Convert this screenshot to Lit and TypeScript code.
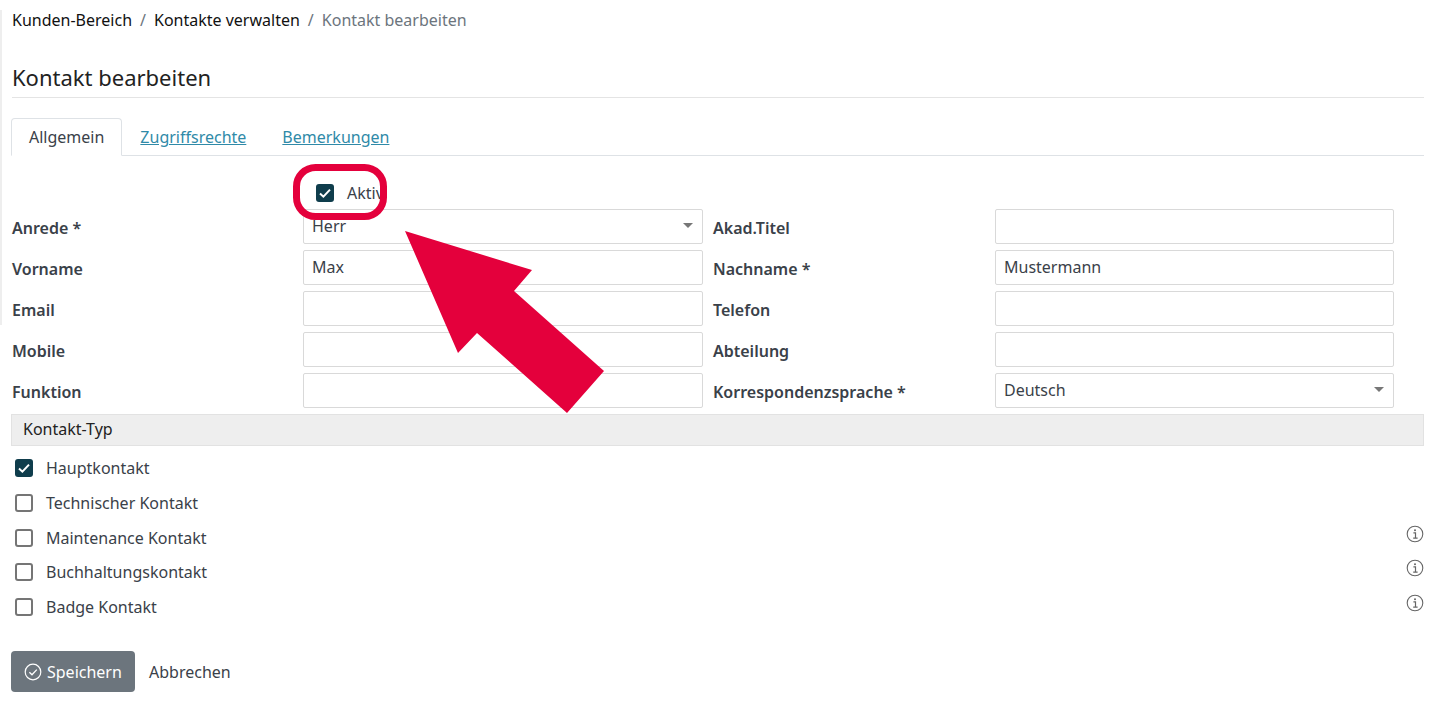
import { LitElement, css, html, svg } from "lit";
import { customElement } from "lit/decorators.js";

const FIELDS = [
  { label: "Anrede *", value: "Herr", select: true, label2: "Akad.Titel", value2: "" },
  { label: "Vorname", value: "Max", label2: "Nachname *", value2: "Mustermann" },
  { label: "Email", value: "", label2: "Telefon", value2: "" },
  { label: "Mobile", value: "", label2: "Abteilung", value2: "" },
  { label: "Funktion", value: "", label2: "Korrespondenzsprache *", value2: "Deutsch", select2: true },
];

const TYPES = [
  { label: "Hauptkontakt", checked: true },
  { label: "Technischer Kontakt" },
  { label: "Maintenance Kontakt", info: true },
  { label: "Buchhaltungskontakt", info: true },
  { label: "Badge Kontakt", info: true },
];

@customElement("app-root")
export class AppRoot extends LitElement {
  private _box(checked: boolean | undefined) {
    return html`<span class="box ${checked ? "on" : ""}">
      ${checked
        ? html`<svg viewBox="0 0 18 18" width="18" height="18">
            <path d="M4 9.5l3.4 3.2L14 5.6" fill="none" stroke="#fff" stroke-width="2" />
          </svg>`
        : ""}
    </span>`;
  }

  private _control(value: string, select?: boolean) {
    return html`<div class="control">
      <span>${value}</span>${select ? html`<i class="caret"></i>` : ""}
    </div>`;
  }

  private _info() {
    return html`<svg class="info" viewBox="0 0 18 18" width="18" height="18">
      <circle cx="9" cy="9" r="7.8" fill="none" stroke="#666" stroke-width="1.1" />
      <path d="M7.4 7.9H9.5V13M7.2 13.2h4.4" fill="none" stroke="#666" stroke-width="1.2" />
      <circle cx="9" cy="5.2" r="1" fill="#666" />
    </svg>`;
  }

  protected render() {
    return html`
      <div class="sliver"></div>
      <nav class="crumbs">
        <span>Kunden-Bereich</span><b>/</b><span>Kontakte verwalten</span><b>/</b>
        <span class="current">Kontakt bearbeiten</span>
      </nav>
      <h1>Kontakt bearbeiten</h1>
      <div class="tabs">
        <span class="tab active">Allgemein</span>
        <a class="tab">Zugriffsrechte</a>
        <a class="tab">Bemerkungen</a>
      </div>
      <div class="aktiv">${this._box(true)}<span>Aktiv</span></div>
      <div class="form">
        ${FIELDS.map(
          (f) => html`
            <label>${f.label}</label>
            ${this._control(f.value, f.select)}
            <label>${f.label2}</label>
            ${this._control(f.value2, f.select2)}
          `
        )}
      </div>
      <div class="section">Kontakt-Typ</div>
      <div class="types">
        ${TYPES.map(
          (t) => html`<div class="type">
            ${this._box(t.checked)}<span>${t.label}</span>${t.info ? this._info() : ""}
          </div>`
        )}
      </div>
      <div class="actions">
        <button>
          <svg viewBox="0 0 18 18" width="18" height="18">
            <circle cx="9" cy="9" r="7.8" fill="none" stroke="#fff" stroke-width="1.2" />
            <path d="M5.4 9.2l2.6 2.6 4.8-5.2" fill="none" stroke="#fff" stroke-width="1.3" />
          </svg>
          Speichern
        </button>
        <span class="cancel">Abbrechen</span>
      </div>
      <svg class="overlay" width="1430" height="702" viewBox="0 0 1430 702">
        ${svg`<rect x="296.5" y="167.5" width="87" height="49" rx="19" fill="none" stroke="#e4003c" stroke-width="7" />
        <polygon points="405,231 532,270 514,291 604,371 567,413 477,333 458,353" fill="#e4003c" />`}
      </svg>
    `;
  }

  static styles = css`
    :host {
      display: block;
      position: relative;
      height: 702px;
      overflow: hidden;
      box-sizing: border-box;
      padding: 0 6px 0 12px;
      background: #fff;
      font-family: "Noto Sans", sans-serif;
      font-size: 16px;
      color: #3a4149;
    }

    .sliver {
      position: absolute;
      left: 0;
      top: 10px;
      width: 2px;
      height: 315px;
      background: #eee;
    }

    .crumbs {
      display: flex;
      align-items: center;
      height: 40px;
      color: #111;
    }

    .crumbs b {
      font-weight: 400;
      color: #6c757d;
      margin: 0 8px;
    }

    .current {
      color: #6c757d;
    }

    h1 {
      margin: 0;
      height: 58px;
      box-sizing: border-box;
      padding-top: 21px;
      font-size: 22px;
      font-weight: 400;
      line-height: 32px;
      color: #222;
      border-bottom: 1px solid #e4e4e4;
    }

    .tabs {
      display: flex;
      margin: 20px 0 0 -1px;
      height: 38px;
      box-sizing: border-box;
      border-bottom: 1px solid #dee2e6;
    }

    .tab {
      padding: 0 17px;
      line-height: 36px;
      border: 1px solid transparent;
      color: #2f8aa8;
      text-decoration: underline;
    }

    .tab.active {
      color: #3a4149;
      text-decoration: none;
      background: #fff;
      border-color: #dee2e6 #dee2e6 #fff;
      border-radius: 4px 4px 0 0;
      height: 38px;
      box-sizing: border-box;
    }

    .aktiv {
      display: flex;
      align-items: center;
      gap: 13px;
      height: 53px;
      padding: 20px 0 0 304px;
      box-sizing: border-box;
    }

    .box {
      flex: none;
      width: 18px;
      height: 18px;
      box-sizing: border-box;
      border: 2px solid #757575;
      border-radius: 3px;
      background: #fff;
      display: block;
    }

    .box.on {
      border: 0;
      background: #0f3d4c;
    }

    .box svg {
      display: block;
    }

    .form {
      display: grid;
      grid-template-columns: 291px 400px 292px 399px;
      column-gap: 0;
      row-gap: 6px;
      grid-auto-rows: 35px;
      align-items: center;
    }

    .form label {
      font-weight: 600;
      font-size: 16px;
      padding-top: 3px;
    }

    .form label:nth-child(4n + 3) {
      padding-left: 10px;
    }

    .control {
      height: 35px;
      box-sizing: border-box;
      border: 1px solid #d9d9d9;
      border-radius: 2px;
      padding: 0 9px 2px 8px;
      display: flex;
      align-items: center;
      justify-content: space-between;
    }

    .caret {
      width: 0;
      height: 0;
      border: 5px solid transparent;
      border-top: 5px solid #777;
      border-bottom: 0;
    }

    .section {
      margin: 6px 0 0 -1px;
      height: 32px;
      box-sizing: border-box;
      border: 1px solid #e2e2e2;
      background: #eee;
      padding-left: 11px;
      line-height: 28px;
      color: #222;
    }

    .types {
      margin-top: 5px;
      padding-left: 3px;
    }

    .type {
      display: flex;
      align-items: center;
      gap: 13px;
      height: 34.7px;
    }

    .info {
      margin-left: auto;
      margin-top: -8px;
    }

    .actions {
      display: flex;
      align-items: center;
      margin: 27px 0 0 -1px;
      gap: 14px;
    }

    button {
      display: flex;
      align-items: center;
      gap: 5px;
      width: 124px;
      height: 41px;
      padding: 0 0 0 13px;
      border: 0;
      border-radius: 4px;
      background: #6c757d;
      color: #fff;
      font: inherit;
    }

    .overlay {
      position: absolute;
      left: 0;
      top: 0;
      pointer-events: none;
    }
  `;
}
